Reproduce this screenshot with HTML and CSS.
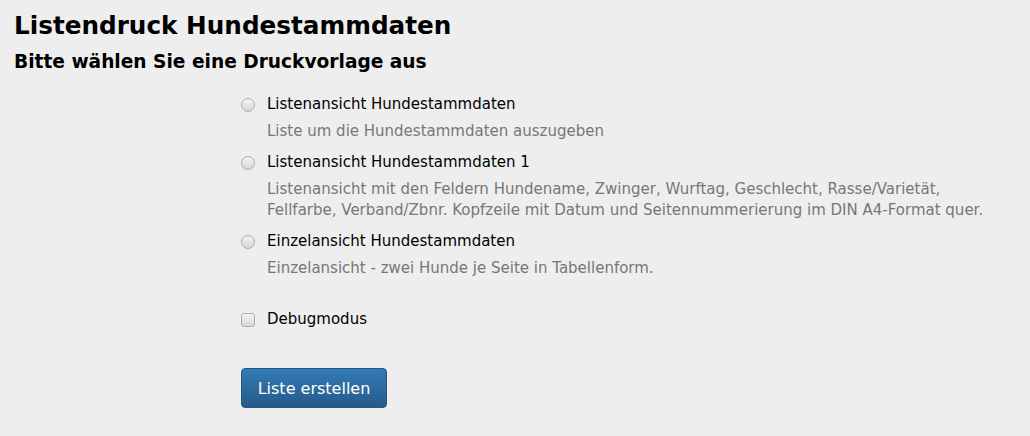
FILE: index.html
```html
<!DOCTYPE html>
<html lang="de">
<head>
    <meta charset="UTF-8">
    <meta name="viewport" content="width=device-width, initial-scale=1.0">
    <title>Listendruck Hundestammdaten</title>
    <link rel="stylesheet" href="styles.css">
</head>
<body>
    <div class="page">
        <h1>Listendruck Hundestammdaten</h1>
        <h2>Bitte wählen Sie eine Druckvorlage aus</h2>

        <form class="print-form">
            <div class="option">
                <label class="option-label">
                    <span class="radio"></span>
                    <input type="radio" name="vorlage" value="1">
                    Listenansicht Hundestammdaten
                </label>
                <p class="help">Liste um die Hundestammdaten auszugeben</p>
            </div>
            <div class="option">
                <label class="option-label">
                    <span class="radio"></span>
                    <input type="radio" name="vorlage" value="2">
                    Listenansicht Hundestammdaten 1
                </label>
                <p class="help">Listenansicht mit den Feldern Hundename, Zwinger, Wurftag, Geschlecht, Rasse/Varietät,<br>Fellfarbe, Verband/Zbnr. Kopfzeile mit Datum und Seitennummerierung im DIN A4-Format quer.</p>
            </div>
            <div class="option">
                <label class="option-label">
                    <span class="radio"></span>
                    <input type="radio" name="vorlage" value="3">
                    Einzelansicht Hundestammdaten
                </label>
                <p class="help">Einzelansicht - zwei Hunde je Seite in Tabellenform.</p>
            </div>

            <div class="option debug">
                <label class="option-label">
                    <span class="checkbox"></span>
                    <input type="checkbox" name="debug">
                    Debugmodus
                </label>
            </div>

            <button type="button" class="btn-primary">Liste erstellen</button>
        </form>
    </div>
</body>
</html>
```

FILE: styles.css
```css
body {
    margin: 0;
    background-color: #eeeeee;
    font-family: "DejaVu Sans", Verdana, sans-serif;
    font-size: 15px;
    color: #000;
}
.page {
    padding: 10px 14px;
}
h1 {
    margin: 0;
    font-size: 24.7px;
    line-height: 32px;
    font-weight: bold;
}
h2 {
    margin: 8px 0 0 0;
    font-size: 18.6px;
    line-height: 24px;
    font-weight: bold;
}
.print-form {
    margin: 20px 0 0 227px;
}
.option {
    margin-bottom: 10px;
}
.option-label {
    display: flex;
    align-items: center;
    gap: 12px;
    line-height: 21px;
    cursor: pointer;
}
.option-label input {
    display: none;
}
.radio,
.checkbox {
    width: 12px;
    height: 12px;
    border: 1px solid #acacac;
    background: linear-gradient(#f4f4f4, #d6d6d6);
    flex-shrink: 0;
}
.radio {
    border-radius: 50%;
}
.checkbox {
    border-radius: 3px;
}
.help {
    margin: 6px 0 0 26px;
    color: #777777;
    line-height: 21px;
}
.debug {
    margin-top: 30px;
}
.btn-primary {
    margin-top: 28px;
    width: 146px;
    height: 40px;
    font-family: "DejaVu Sans", Verdana, sans-serif;
    font-size: 16px;
    color: #fff;
    border: 1px solid #245580;
    border-radius: 4px;
    background: linear-gradient(#337ab7, #265a88);
    cursor: pointer;
}
```
